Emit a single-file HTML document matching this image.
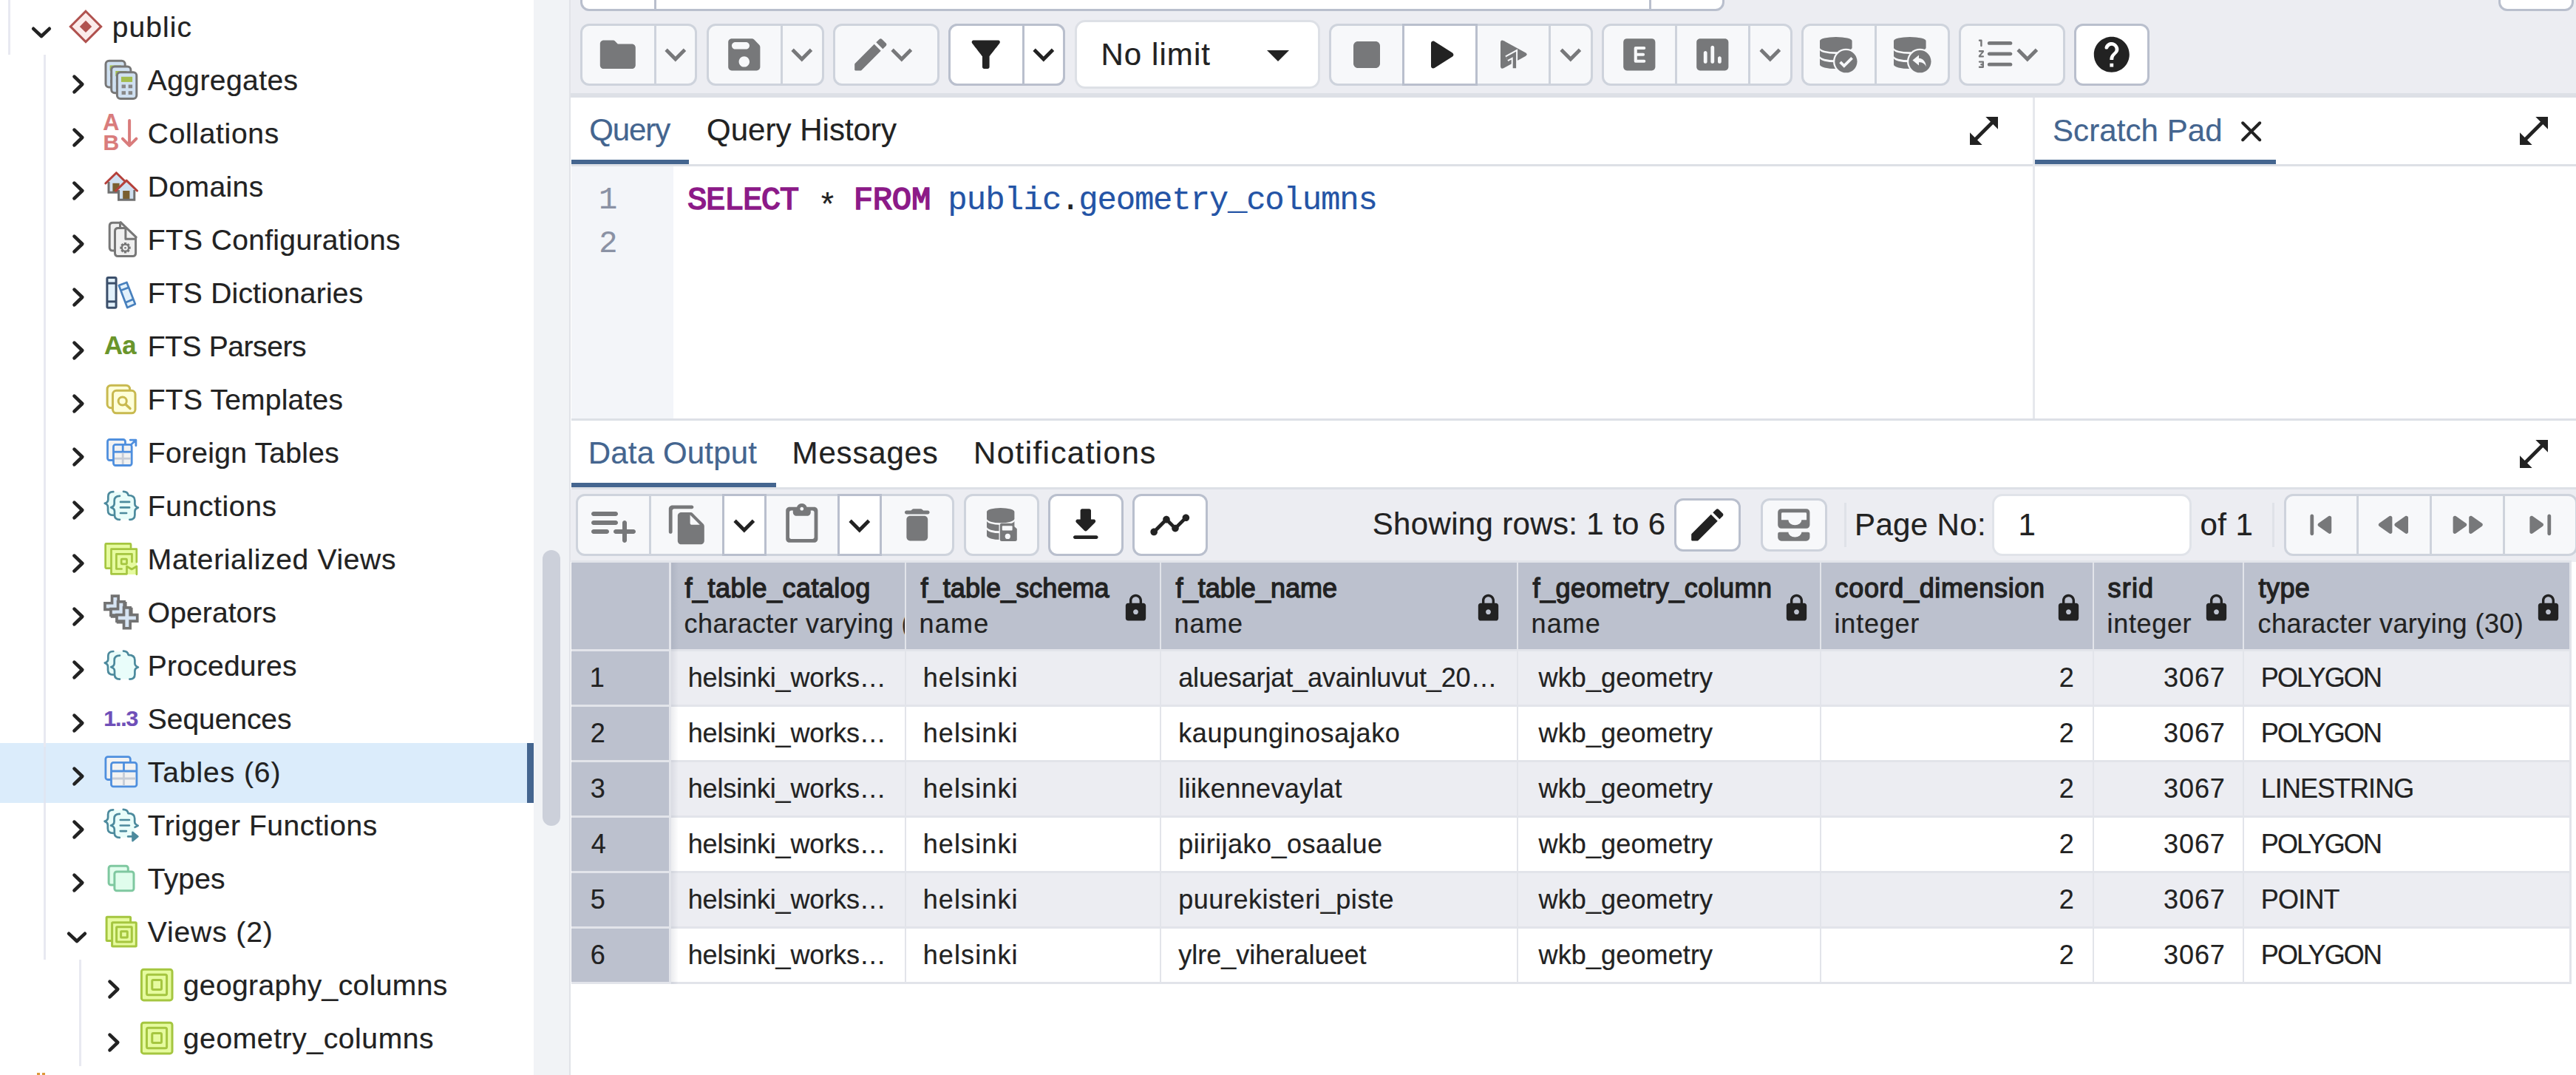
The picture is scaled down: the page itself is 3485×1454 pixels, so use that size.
<!DOCTYPE html>
<html><head><meta charset="utf-8"><title>pgAdmin</title><style>
html,body{margin:0;padding:0;background:#fff}
#app{position:relative;width:3485px;height:1454px;overflow:hidden;background:#fff;font-family:"Liberation Sans",sans-serif;color:#222}
#app div,#app svg,#app span{position:absolute;box-sizing:content-box}
#app svg{overflow:visible}
.t{line-height:1;white-space:pre;color:#222;-webkit-text-stroke-width:.2px}
.m{font-family:"Liberation Mono",monospace}
</style></head><body><div id="app">
<div style="left:0px;top:0px;width:722px;height:1454px;background:#fff;"></div>
<div style="left:722px;top:0px;width:48px;height:1454px;background:#f1f3f6;"></div>
<div style="left:734px;top:744px;width:24px;height:373px;background:#ccd0da;border-radius:12px;"></div>
<div style="left:0px;top:1005px;width:713px;height:81px;background:#dbecfb;"></div>
<div style="left:713px;top:1005px;width:9px;height:81px;background:#44658f;"></div>
<div style="left:11px;top:0px;width:3px;height:74px;background:#e8e9f1;"></div>
<div style="left:59px;top:74px;width:3px;height:1224px;background:#e8e9f1;"></div>
<div style="left:59px;top:1010px;width:3px;height:76px;background:#dfe6f3;"></div>
<div style="left:107px;top:1298px;width:3px;height:144px;background:#e8e9f1;"></div>
<div style="left:50px;top:1451px;width:4px;height:3px;background:#dd9a3a;"></div>
<div style="left:56.5px;top:1451px;width:4px;height:3px;background:#dd9a3a;"></div>
<span class="t" style="left:151.80px;top:16.90px;font-size:39px;letter-spacing:1.040px;">public</span>
<svg style="left:40px;top:28px;" width="32" height="32" viewBox="0 0 32 32"><path d="M5.2 10.8 L16 21 L26.8 10.8" fill="none" stroke="#222" stroke-width="4.6" stroke-linecap="round" stroke-linejoin="round"/></svg>
<span class="t" style="left:199.80px;top:88.90px;font-size:39px;letter-spacing:0.414px;">Aggregates</span>
<svg style="left:92px;top:94px;" width="32" height="40" viewBox="0 0 32 40"><path d="M8.5 9.7 L19.3 20 L8.5 30.3" fill="none" stroke="#222" stroke-width="4.6" stroke-linecap="round" stroke-linejoin="round"/></svg>
<span class="t" style="left:199.80px;top:160.90px;font-size:39px;letter-spacing:0.683px;">Collations</span>
<svg style="left:92px;top:166px;" width="32" height="40" viewBox="0 0 32 40"><path d="M8.5 9.7 L19.3 20 L8.5 30.3" fill="none" stroke="#222" stroke-width="4.6" stroke-linecap="round" stroke-linejoin="round"/></svg>
<span class="t" style="left:199.80px;top:232.90px;font-size:39px;letter-spacing:0.419px;">Domains</span>
<svg style="left:92px;top:238px;" width="32" height="40" viewBox="0 0 32 40"><path d="M8.5 9.7 L19.3 20 L8.5 30.3" fill="none" stroke="#222" stroke-width="4.6" stroke-linecap="round" stroke-linejoin="round"/></svg>
<span class="t" style="left:199.80px;top:304.90px;font-size:39px;letter-spacing:0.337px;">FTS Configurations</span>
<svg style="left:92px;top:310px;" width="32" height="40" viewBox="0 0 32 40"><path d="M8.5 9.7 L19.3 20 L8.5 30.3" fill="none" stroke="#222" stroke-width="4.6" stroke-linecap="round" stroke-linejoin="round"/></svg>
<span class="t" style="left:199.80px;top:376.90px;font-size:39px;letter-spacing:0.211px;">FTS Dictionaries</span>
<svg style="left:92px;top:382px;" width="32" height="40" viewBox="0 0 32 40"><path d="M8.5 9.7 L19.3 20 L8.5 30.3" fill="none" stroke="#222" stroke-width="4.6" stroke-linecap="round" stroke-linejoin="round"/></svg>
<span class="t" style="left:199.80px;top:448.90px;font-size:39px;letter-spacing:-0.416px;">FTS Parsers</span>
<svg style="left:92px;top:454px;" width="32" height="40" viewBox="0 0 32 40"><path d="M8.5 9.7 L19.3 20 L8.5 30.3" fill="none" stroke="#222" stroke-width="4.6" stroke-linecap="round" stroke-linejoin="round"/></svg>
<span class="t" style="left:199.80px;top:520.90px;font-size:39px;letter-spacing:0.222px;">FTS Templates</span>
<svg style="left:92px;top:526px;" width="32" height="40" viewBox="0 0 32 40"><path d="M8.5 9.7 L19.3 20 L8.5 30.3" fill="none" stroke="#222" stroke-width="4.6" stroke-linecap="round" stroke-linejoin="round"/></svg>
<span class="t" style="left:199.80px;top:592.90px;font-size:39px;letter-spacing:0.300px;">Foreign Tables</span>
<svg style="left:92px;top:598px;" width="32" height="40" viewBox="0 0 32 40"><path d="M8.5 9.7 L19.3 20 L8.5 30.3" fill="none" stroke="#222" stroke-width="4.6" stroke-linecap="round" stroke-linejoin="round"/></svg>
<span class="t" style="left:199.80px;top:664.90px;font-size:39px;letter-spacing:0.640px;">Functions</span>
<svg style="left:92px;top:670px;" width="32" height="40" viewBox="0 0 32 40"><path d="M8.5 9.7 L19.3 20 L8.5 30.3" fill="none" stroke="#222" stroke-width="4.6" stroke-linecap="round" stroke-linejoin="round"/></svg>
<span class="t" style="left:199.80px;top:736.90px;font-size:39px;letter-spacing:0.658px;">Materialized Views</span>
<svg style="left:92px;top:742px;" width="32" height="40" viewBox="0 0 32 40"><path d="M8.5 9.7 L19.3 20 L8.5 30.3" fill="none" stroke="#222" stroke-width="4.6" stroke-linecap="round" stroke-linejoin="round"/></svg>
<span class="t" style="left:199.80px;top:808.90px;font-size:39px;letter-spacing:0.099px;">Operators</span>
<svg style="left:92px;top:814px;" width="32" height="40" viewBox="0 0 32 40"><path d="M8.5 9.7 L19.3 20 L8.5 30.3" fill="none" stroke="#222" stroke-width="4.6" stroke-linecap="round" stroke-linejoin="round"/></svg>
<span class="t" style="left:199.80px;top:880.90px;font-size:39px;letter-spacing:0.251px;">Procedures</span>
<svg style="left:92px;top:886px;" width="32" height="40" viewBox="0 0 32 40"><path d="M8.5 9.7 L19.3 20 L8.5 30.3" fill="none" stroke="#222" stroke-width="4.6" stroke-linecap="round" stroke-linejoin="round"/></svg>
<span class="t" style="left:199.80px;top:952.90px;font-size:39px;letter-spacing:-0.057px;">Sequences</span>
<svg style="left:92px;top:958px;" width="32" height="40" viewBox="0 0 32 40"><path d="M8.5 9.7 L19.3 20 L8.5 30.3" fill="none" stroke="#222" stroke-width="4.6" stroke-linecap="round" stroke-linejoin="round"/></svg>
<span class="t" style="left:199.80px;top:1024.90px;font-size:39px;letter-spacing:0.939px;">Tables (6)</span>
<svg style="left:92px;top:1030px;" width="32" height="40" viewBox="0 0 32 40"><path d="M8.5 9.7 L19.3 20 L8.5 30.3" fill="none" stroke="#222" stroke-width="4.6" stroke-linecap="round" stroke-linejoin="round"/></svg>
<span class="t" style="left:199.80px;top:1096.90px;font-size:39px;letter-spacing:0.525px;">Trigger Functions</span>
<svg style="left:92px;top:1102px;" width="32" height="40" viewBox="0 0 32 40"><path d="M8.5 9.7 L19.3 20 L8.5 30.3" fill="none" stroke="#222" stroke-width="4.6" stroke-linecap="round" stroke-linejoin="round"/></svg>
<span class="t" style="left:199.80px;top:1168.90px;font-size:39px;letter-spacing:0.162px;">Types</span>
<svg style="left:92px;top:1174px;" width="32" height="40" viewBox="0 0 32 40"><path d="M8.5 9.7 L19.3 20 L8.5 30.3" fill="none" stroke="#222" stroke-width="4.6" stroke-linecap="round" stroke-linejoin="round"/></svg>
<span class="t" style="left:199.80px;top:1240.90px;font-size:39px;letter-spacing:0.883px;">Views (2)</span>
<svg style="left:88px;top:1252px;" width="32" height="32" viewBox="0 0 32 32"><path d="M5.2 10.8 L16 21 L26.8 10.8" fill="none" stroke="#222" stroke-width="4.6" stroke-linecap="round" stroke-linejoin="round"/></svg>
<span class="t" style="left:247.80px;top:1312.90px;font-size:39px;letter-spacing:0.386px;">geography_columns</span>
<svg style="left:140px;top:1318px;" width="32" height="40" viewBox="0 0 32 40"><path d="M8.5 9.7 L19.3 20 L8.5 30.3" fill="none" stroke="#222" stroke-width="4.6" stroke-linecap="round" stroke-linejoin="round"/></svg>
<span class="t" style="left:247.80px;top:1384.90px;font-size:39px;letter-spacing:0.621px;">geometry_columns</span>
<svg style="left:140px;top:1390px;" width="32" height="40" viewBox="0 0 32 40"><path d="M8.5 9.7 L19.3 20 L8.5 30.3" fill="none" stroke="#222" stroke-width="4.6" stroke-linecap="round" stroke-linejoin="round"/></svg>
<svg style="left:82px;top:0px;" width="70" height="72" viewBox="0 0 70 72"><path d="M34 15.2L54.7 35.9L34 56.599999999999994L13.3 35.9Z" fill="#fbeceb" stroke="#b0524f" stroke-width="3"/><path d="M34 27.7L42.2 35.9L34 44.099999999999994L25.8 35.9Z" fill="#b0524f"/></svg>
<svg style="left:130px;top:72px;" width="70" height="72" viewBox="0 0 70 72"><rect x="13.00" y="10.30" width="26.20" height="35.80" rx="4.5" fill="#cfe0f1" stroke="#777" stroke-width="3"/><rect x="18.6" y="16.4" width="15.1" height="7.1" fill="#a3bd4e"/><rect x="19.2" y="27.1" width="5.4" height="4.8" fill="#888"/><rect x="19.2" y="35.8" width="5.4" height="4.8" fill="#888"/><rect x="28.3" y="27.1" width="5.4" height="4.8" fill="#888"/><rect x="28.3" y="35.8" width="5.4" height="4.8" fill="#888"/><rect x="20.70" y="17.90" width="26.20" height="35.90" rx="4.5" fill="#cfe0f1" stroke="#777" stroke-width="3"/><rect x="26.3" y="24.0" width="15.1" height="7.1" fill="#a3bd4e"/><rect x="26.9" y="34.7" width="5.4" height="4.8" fill="#888"/><rect x="26.9" y="43.4" width="5.4" height="4.8" fill="#888"/><rect x="36.0" y="34.7" width="5.4" height="4.8" fill="#888"/><rect x="36.0" y="43.4" width="5.4" height="4.8" fill="#888"/><rect x="28.40" y="25.70" width="26.40" height="35.80" rx="4.5" fill="#cfe0f1" stroke="#777" stroke-width="3"/><rect x="34.0" y="31.8" width="15.1" height="7.1" fill="#a3bd4e"/><rect x="34.6" y="42.5" width="5.4" height="4.8" fill="#888"/><rect x="34.6" y="51.2" width="5.4" height="4.8" fill="#888"/><rect x="43.7" y="42.5" width="5.4" height="4.8" fill="#888"/><rect x="43.7" y="51.2" width="5.4" height="4.8" fill="#888"/></svg>
<svg style="left:130px;top:144px;" width="70" height="72" viewBox="0 0 70 72"><path d="M45.1 18.9V52.3M35.9 43.6L45.1 52.8L54.4 43.6" fill="none" stroke="#d97c7c" stroke-width="4" stroke-linecap="round" stroke-linejoin="round"/></svg>
<span class="t" style="left:139.20px;top:149.90px;font-size:30.6px;font-weight:700;color:#d97c7c;">A</span>
<span class="t" style="left:139.50px;top:178.00px;font-size:30px;font-weight:700;color:#d97c7c;">B</span>
<svg style="left:130px;top:216px;" width="70" height="72" viewBox="0 0 70 72"><path d="M16.500 30V44.500H39V30L27.400 19Z" fill="#cfe0f1"/><rect x="22.400" y="31.800" width="9.200" height="11.300" fill="#7a5f30"/><path d="M17 30V44.300H38" fill="none" stroke="#707070" stroke-width="3"/><path d="M12.800 32L27.400 17.700L42.200 32.200" fill="none" stroke="#b5403a" stroke-width="3" stroke-linecap="round" stroke-linejoin="round"/><path d="M30 40V54H52.500V40L41.100 29Z" fill="#cfe0f1"/><rect x="36.200" y="42" width="9.200" height="11" fill="#7a5f30"/><path d="M30.500 41V54.200H51.800V41" fill="none" stroke="#707070" stroke-width="3"/><path d="M26.600 42.200L41.100 28.100L55.500 42" fill="none" stroke="#b5403a" stroke-width="3" stroke-linecap="round" stroke-linejoin="round"/></svg>
<svg style="left:130px;top:288px;" width="70" height="72" viewBox="0 0 70 72"><path d="M22 13.300H33L40 20.400H26V51H22Q18.200 51 18.200 46.700V17.600Q18.200 13.300 22 13.300Z" fill="#f0f0f0"/><path d="M29.500 20.400H41L53.600 33V54.300Q53.600 58.600 49.300 58.600H29.800Q25.500 58.600 25.500 54.300V24.700Q25.500 20.400 29.500 20.400Z" fill="#f0f0f0"/><path d="M32.500 13.300H22.500Q18.200 13.300 18.200 17.600V46.700Q18.200 51 22.500 51H25.500" fill="none" stroke="#777" stroke-width="3" stroke-linecap="round" stroke-linejoin="round"/><path d="M39.900 20.400H29.800Q25.500 20.400 25.500 24.700V54.300Q25.500 58.600 29.800 58.600H49.300Q53.600 58.600 53.600 54.300V33.500" fill="none" stroke="#777" stroke-width="3" stroke-linecap="round" stroke-linejoin="round"/><path d="M33.200 12.600L54.200 32.900M39.900 20.400V35.200H53.600M32.500 13.300V20.400" fill="none" stroke="#777" stroke-width="3" stroke-linecap="round" stroke-linejoin="round"/><path d="M44.00 47.20L46.70 47.20M42.68 50.38L44.59 52.29M39.50 51.70L39.50 54.40M36.32 50.38L34.41 52.29M35.00 47.20L32.30 47.20M36.32 44.02L34.41 42.11M39.50 42.70L39.50 40.00M42.68 44.02L44.59 42.11" fill="none" stroke="#777" stroke-width="3.300"/><circle cx="39.5" cy="47.2" r="5.700" fill="#777"/><circle cx="39.5" cy="47.2" r="3.400" fill="#f0f0f0"/><circle cx="39.5" cy="47.2" r="1.300" fill="#777"/></svg>
<svg style="left:130px;top:360px;" width="70" height="72" viewBox="0 0 70 72"><rect x="14.90" y="15.60" width="12.20" height="40.60" rx="1.5" fill="#e2f1fb" stroke="#3b4f6b" stroke-width="3"/><line x1="14.00" y1="23.10" x2="28.00" y2="23.10" stroke="#3b4f6b" stroke-width="3" stroke-linecap="butt"/><line x1="14.00" y1="47.90" x2="28.00" y2="47.90" stroke="#3b4f6b" stroke-width="3" stroke-linecap="butt"/><path d="M30.800 25.900L41.500 21.900L52.900 51.200L42.200 56Z" fill="#e2f1fb" stroke="#4880bd" stroke-width="2.700" stroke-linejoin="round"/><path d="M33.700 32.800L44.300 28.700M39.700 49.300L50.200 44.700" fill="none" stroke="#4880bd" stroke-width="2.700"/></svg>
<span class="t" style="left:141.00px;top:449.90px;font-size:34.6px;font-weight:700;color:#6a952b;letter-spacing:-0.771px;">Aa</span>
<svg style="left:130px;top:504px;" width="70" height="72" viewBox="0 0 70 72"><rect x="15.10" y="17.20" width="30.50" height="30.50" rx="5" fill="#feffd9" stroke="#c8b94f" stroke-width="3"/><rect x="22.50" y="24.30" width="30.50" height="30.50" rx="5" fill="#feffd9" stroke="#c8b94f" stroke-width="3"/><circle cx="35.7" cy="38.5" r="5.6" fill="none" stroke="#c8b94f" stroke-width="3"/><path d="M40 43L46 48.6" stroke="#c8b94f" stroke-width="3.4" stroke-linecap="round"/></svg>
<svg style="left:130px;top:576px;" width="70" height="72" viewBox="0 0 70 72"><rect x="15.50" y="18.50" width="24.00" height="28.00" rx="2.8" fill="#f2f2f2" stroke="#4f8fde" stroke-width="2.8"/><rect x="23.50" y="25.40" width="24.70" height="28.10" rx="2.8" fill="#f2f2f2" stroke="#4f8fde" stroke-width="2.8"/><line x1="36.20" y1="25.20" x2="36.20" y2="35.20" stroke="#4f8fde" stroke-width="2.8" stroke-linecap="butt"/><line x1="23.30" y1="35.20" x2="48.40" y2="35.20" stroke="#4f8fde" stroke-width="2.8" stroke-linecap="butt"/><line x1="25.00" y1="44.20" x2="46.80" y2="44.20" stroke="#c6ccd6" stroke-width="2.8" stroke-linecap="butt"/><line x1="36.20" y1="36.60" x2="36.20" y2="52.00" stroke="#c6ccd6" stroke-width="2.8" stroke-linecap="butt"/><path d="M47.200 25.500L53.600 19.400M46.200 19.100H53.900V26.700" fill="none" stroke="#4f8fde" stroke-width="2.800" stroke-linecap="round" stroke-linejoin="round"/></svg>
<svg style="left:130px;top:648px;" width="70" height="72" viewBox="0 0 70 72"><g transform="translate(0.2,1.9)"><path d="M23 15.5H37C41 15.500 43 17 43.500 20.300C50 20.300 52 23 52 27V46.500C52 50 50 52.700 45 52.700H32C27 52.700 25 50 25 46.900H23C18.500 46.900 16 44.500 16 40.500V21.500C16 17.500 18.500 15.500 23 15.500Z" fill="#e9fdfa"/><path d="M23.100 15.300C18.500 15.300 16.100 17.500 16.100 21.500V25.500C16.100 28.300 14.500 30 11.600 30.900C14.500 31.800 15.800 33.500 15.800 36.300V40.500C15.800 44.500 18.500 46.900 23.100 46.900" fill="none" stroke="#4c8a9d" stroke-width="2.7" stroke-linecap="round" stroke-linejoin="round"/><path d="M31.800 20.900C27 20.900 24.500 23.200 24.500 27.200V31.200C24.500 34 23 35.600 20 36.500C23 37.400 24.800 39 24.800 41.800V46.500C24.800 50.500 27.200 52.900 31.800 52.900" fill="none" stroke="#4c8a9d" stroke-width="2.7" stroke-linecap="round" stroke-linejoin="round"/><path d="M36.800 14.900C41 14.900 42.800 16.800 43.500 20.100C49.500 20.100 52.200 22.500 52.200 27V31.500C52.200 34 53.800 35.600 56.700 36.700C53.800 37.600 52.200 39.200 52.200 42V46.500C52.200 50.500 49.800 52.900 45.200 52.900" fill="none" stroke="#4c8a9d" stroke-width="2.7" stroke-linecap="round" stroke-linejoin="round"/><path d="M32.800 29H44.900M32.800 36.500H44.900M32.800 44.100H40.900" fill="none" stroke="#4c8a9d" stroke-width="2.7" stroke-linecap="round" stroke-linejoin="round"/></g></svg>
<svg style="left:130px;top:720px;" width="70" height="72" viewBox="0 0 70 72"><rect x="12.65" y="15.45" width="34.40" height="33.10" rx="1" fill="#e6fb9f" stroke="#a5c640" stroke-width="2.7"/><path d="M20.5 22.7H54.8V40.7L55 46V57H41.5V56.3H20.5Z" fill="#e6fb9f"/><path d="M54.8 40.2V22.7H20.5V56.3H41.5V46L48.2 50L54.9 46V56.8" fill="none" stroke="#a5c640" stroke-width="2.7" stroke-linecap="round" stroke-linejoin="round"/><path d="M34.6 49.5H27.4V29.4H48.5V40" fill="none" stroke="#a5c640" stroke-width="2.7" stroke-linecap="round" stroke-linejoin="round"/><rect x="34.15" y="36.05" width="7.40" height="6.80" rx="1" fill="#e6fb9f" stroke="#a5c640" stroke-width="2.7"/></svg>
<svg style="left:130px;top:792px;" width="70" height="72" viewBox="0 0 70 72"><path d="M21.54 14.15H30.16V23.74H39.75V32.36H30.16V41.95H21.54V32.36H11.95V23.74H21.54Z" fill="#d6e4f3" stroke="#727272" stroke-width="3.7"/><path d="M29.54 21.95H38.16V31.54H47.75V40.16H38.16V49.75H29.54V40.16H19.95V31.54H29.54Z" fill="#d6e4f3" stroke="#727272" stroke-width="3.7"/><path d="M37.54 29.95H46.16V39.54H55.75V48.16H46.16V57.75H37.54V48.16H27.95V39.54H37.54Z" fill="#d6e4f3" stroke="#727272" stroke-width="3.7"/></svg>
<svg style="left:130px;top:864px;" width="70" height="72" viewBox="0 0 70 72"><g transform="translate(0.2,1.7)"><path d="M23 15.5H37C41 15.500 43 17 43.500 20.300C50 20.300 52 23 52 27V46.500C52 50 50 52.700 45 52.700H32C27 52.700 25 50 25 46.900H23C18.500 46.900 16 44.500 16 40.500V21.500C16 17.500 18.500 15.500 23 15.500Z" fill="#e9fdfa"/><path d="M23.100 15.300C18.500 15.300 16.100 17.500 16.100 21.500V25.500C16.100 28.300 14.500 30 11.600 30.900C14.500 31.800 15.800 33.500 15.800 36.300V40.500C15.800 44.500 18.500 46.900 23.100 46.900" fill="none" stroke="#4c8a9d" stroke-width="2.7" stroke-linecap="round" stroke-linejoin="round"/><path d="M31.800 20.900C27 20.900 24.500 23.200 24.500 27.200V31.200C24.500 34 23 35.600 20 36.500C23 37.400 24.800 39 24.800 41.800V46.500C24.800 50.500 27.200 52.900 31.800 52.900" fill="none" stroke="#4c8a9d" stroke-width="2.7" stroke-linecap="round" stroke-linejoin="round"/><path d="M36.800 14.900C41 14.900 42.800 16.800 43.500 20.100C49.500 20.100 52.200 22.500 52.200 27V31.500C52.200 34 53.800 35.600 56.700 36.700C53.800 37.600 52.200 39.200 52.200 42V46.500C52.200 50.500 49.800 52.900 45.200 52.900" fill="none" stroke="#4c8a9d" stroke-width="2.7" stroke-linecap="round" stroke-linejoin="round"/></g></svg>
<span class="t" style="left:140.20px;top:956.90px;font-size:30.3px;font-weight:700;color:#6f4fb8;letter-spacing:-1.128px;">1..3</span>
<svg style="left:130px;top:1008px;" width="70" height="72" viewBox="0 0 70 72"><rect x="12.90" y="15.60" width="33.40" height="30.90" rx="3" fill="#f2f2f2" stroke="#4f8fde" stroke-width="2.8"/><rect x="20.50" y="23.40" width="34.40" height="32.50" rx="3" fill="#f2f2f2" stroke="#4f8fde" stroke-width="2.8"/><line x1="37.50" y1="23.20" x2="37.50" y2="35.00" stroke="#4f8fde" stroke-width="2.8" stroke-linecap="butt"/><line x1="20.30" y1="35.00" x2="55.10" y2="35.00" stroke="#4f8fde" stroke-width="2.8" stroke-linecap="butt"/><line x1="21.90" y1="45.00" x2="53.50" y2="45.00" stroke="#c6ccd6" stroke-width="2.8" stroke-linecap="butt"/><line x1="37.50" y1="36.40" x2="37.50" y2="54.40" stroke="#c6ccd6" stroke-width="2.8" stroke-linecap="butt"/></svg>
<svg style="left:130px;top:1080px;" width="70" height="72" viewBox="0 0 70 72"><g transform="translate(0,0)"><path d="M23 15.5H37C41 15.500 43 17 43.500 20.300C50 20.300 52 23 52 27V46.500C52 50 50 52.700 45 52.700H32C27 52.700 25 50 25 46.900H23C18.500 46.900 16 44.500 16 40.500V21.500C16 17.500 18.500 15.500 23 15.500Z" fill="#e9fdfa"/><path d="M23.100 15.300C18.500 15.300 16.100 17.500 16.100 21.500V25.500C16.100 28.300 14.500 30 11.600 30.900C14.500 31.800 15.800 33.500 15.800 36.300V40.500C15.800 44.500 18.500 46.900 23.100 46.900" fill="none" stroke="#4c8a9d" stroke-width="2.7" stroke-linecap="round" stroke-linejoin="round"/><path d="M31.800 20.900C27 20.900 24.500 23.200 24.500 27.200V31.200C24.500 34 23 35.600 20 36.500C23 37.400 24.800 39 24.800 41.800V46.500C24.800 50.500 27.200 52.900 31.800 52.900" fill="none" stroke="#4c8a9d" stroke-width="2.7" stroke-linecap="round" stroke-linejoin="round"/><path d="M36.800 14.900C41 14.900 42.800 16.800 43.500 20.100C49.500 20.100 52.200 22.500 52.200 27V31.500C52.200 34 53.800 35.600 56.700 36.700C55.500 37.500 54 38.300 52.600 38.800" fill="none" stroke="#4c8a9d" stroke-width="2.7" stroke-linecap="round" stroke-linejoin="round"/><path d="M32.800 29H44.900M32.800 36.500H44.900M32.800 44.100H40.900" fill="none" stroke="#4c8a9d" stroke-width="2.7" stroke-linecap="round" stroke-linejoin="round"/><path d="M43.200 51.400H49" fill="none" stroke="#4c8a9d" stroke-width="2.7" stroke-linecap="round" stroke-linejoin="round"/><path d="M49.400 45.600L56.500 51.400L49.400 57.200Z" fill="#4c8a9d" stroke="#4c8a9d" stroke-width="2.4" stroke-linejoin="round"/></g></svg>
<svg style="left:130px;top:1152px;" width="70" height="72" viewBox="0 0 70 72"><rect x="17.10" y="19.30" width="26.20" height="25.80" rx="3" fill="#e0fdec" stroke="#7fc8a0" stroke-width="3"/><rect x="24.90" y="27.00" width="26.10" height="25.80" rx="3" fill="#e0fdec" stroke="#7fc8a0" stroke-width="3"/></svg>
<svg style="left:130px;top:1224px;" width="70" height="72" viewBox="0 0 70 72"><rect x="14.10" y="16.30" width="32.50" height="32.10" rx="1" fill="#e6fb9f" stroke="#a5c640" stroke-width="3"/><rect x="21.60" y="23.70" width="32.70" height="32.30" rx="1" fill="#e6fb9f" stroke="#a5c640" stroke-width="3"/><rect x="27.60" y="29.70" width="20.70" height="20.30" rx="0.5" fill="#e6fb9f" stroke="#a5c640" stroke-width="3"/><rect x="33.60" y="35.70" width="8.70" height="8.40" rx="0.5" fill="#e6fb9f" stroke="#a5c640" stroke-width="3"/></svg>
<svg style="left:178px;top:1296px;" width="70" height="72" viewBox="0 0 70 72"><rect x="13.40" y="15.20" width="41.60" height="41.70" rx="3" fill="#e6fb9f" stroke="#a5c640" stroke-width="3"/><rect x="20.50" y="22.30" width="27.10" height="27.50" rx="2" fill="#e6fb9f" stroke="#a5c640" stroke-width="3"/><rect x="27.80" y="29.60" width="12.70" height="12.90" rx="1.5" fill="#e6fb9f" stroke="#a5c640" stroke-width="3"/></svg>
<svg style="left:178px;top:1368px;" width="70" height="72" viewBox="0 0 70 72"><rect x="13.40" y="15.20" width="41.60" height="41.70" rx="3" fill="#e6fb9f" stroke="#a5c640" stroke-width="3"/><rect x="20.50" y="22.30" width="27.10" height="27.50" rx="2" fill="#e6fb9f" stroke="#a5c640" stroke-width="3"/><rect x="27.80" y="29.60" width="12.70" height="12.90" rx="1.5" fill="#e6fb9f" stroke="#a5c640" stroke-width="3"/></svg>
<div style="left:769.6px;top:0px;width:2.4px;height:1454px;background:#e1e3e8;"></div>
<div style="left:772px;top:0px;width:2713px;height:126px;background:#ecedf2;"></div>
<div style="left:772px;top:126px;width:2713px;height:6px;background:#dde0e6;"></div>
<div style="left:772px;top:132px;width:2713px;height:1322px;background:#fff;"></div>
<div style="left:785px;top:-30px;width:1542px;height:39px;background:#fff;border:3px solid #b9bfcd;border-radius:12px;"></div>
<div style="left:885px;top:0px;width:3px;height:13px;background:#b9bfcd;"></div>
<div style="left:2231px;top:0px;width:3px;height:13px;background:#b9bfcd;"></div>
<div style="left:3380px;top:-30px;width:96px;height:39px;background:#fff;border:3px solid #b9bfcd;border-radius:12px;"></div>
<div style="left:785px;top:32px;width:152px;height:78px;background:#f7f8fa;border:3px solid #ced3dc;border-radius:12px;"></div>
<div style="left:885px;top:32px;width:3px;height:84px;background:#ced3dc;"></div>
<svg style="left:807.2px;top:45.0px;" width="57.6" height="57.6" viewBox="0 0 24 24"><path fill="#77787a" fill-rule="evenodd" d="M10.59 4.59C10.21 4.21 9.7 4 9.17 4H4c-1.1 0-1.99.9-1.99 2L2 18c0 1.1.9 2 2 2h16c1.1 0 2-.9 2-2V8c0-1.1-.9-2-2-2h-8l-1.41-1.41z"/></svg>
<svg style="left:885.2px;top:45.0px;" width="57.6" height="57.6" viewBox="0 0 24 24"><path fill="#77787a" fill-rule="evenodd" d="M7.41 8.59 12 13.17l4.59-4.58L18 10l-6 6-6-6 1.41-1.41z"/></svg>
<div style="left:956px;top:32px;width:153px;height:78px;background:#f7f8fa;border:3px solid #ced3dc;border-radius:12px;"></div>
<div style="left:1056px;top:32px;width:3px;height:84px;background:#ced3dc;"></div>
<svg style="left:978.0px;top:45.0px;" width="57.6" height="57.6" viewBox="0 0 24 24"><path fill="#77787a" fill-rule="evenodd" d="M17.59 3.59c-.38-.38-.89-.59-1.42-.59H5c-1.11 0-2 .9-2 2v14c0 1.1.9 2 2 2h14c1.1 0 2-.9 2-2V7.83c0-.53-.21-1.04-.59-1.41l-2.82-2.83zM12 19c-1.66 0-3-1.34-3-3s1.34-3 3-3 3 1.34 3 3-1.34 3-3 3zm1-10H7c-1.1 0-2-.9-2-2s.9-2 2-2h6c1.1 0 2 .9 2 2s-.9 2-2 2z"/></svg>
<svg style="left:1056.2px;top:45.0px;" width="57.6" height="57.6" viewBox="0 0 24 24"><path fill="#77787a" fill-rule="evenodd" d="M7.41 8.59 12 13.17l4.59-4.58L18 10l-6 6-6-6 1.41-1.41z"/></svg>
<div style="left:1127px;top:32px;width:138px;height:78px;background:#f7f8fa;border:3px solid #ced3dc;border-radius:12px;"></div>
<svg style="left:1148.8px;top:45.0px;" width="57.6" height="57.6" viewBox="0 0 24 24"><path fill="#77787a" fill-rule="evenodd" d="M3 17.46v3.04c0 .28.22.5.5.5h3.04c.13 0 .26-.05.35-.15L17.81 9.94l-3.75-3.75L3.15 17.1c-.1.1-.15.22-.15.36zM20.71 7.04c.39-.39.39-1.02 0-1.41l-2.34-2.34c-.39-.39-1.02-.39-1.41 0l-1.83 1.83 3.75 3.75 1.83-1.83z"/></svg>
<svg style="left:1191.2px;top:45.0px;" width="57.6" height="57.6" viewBox="0 0 24 24"><path fill="#77787a" fill-rule="evenodd" d="M7.41 8.59 12 13.17l4.59-4.58L18 10l-6 6-6-6 1.41-1.41z"/></svg>
<div style="left:1283px;top:32px;width:152px;height:78px;background:#f7f8fa;border:3px solid #ced3dc;border-radius:12px;"></div>
<div style="left:1283px;top:32px;width:152px;height:78px;background:#fff;border:3px solid #b9bfcd;border-radius:12px;"></div>
<div style="left:1383px;top:32px;width:3px;height:84px;background:#b9bfcd;"></div>
<svg style="left:1305.2px;top:45.0px;" width="57.6" height="57.6" viewBox="0 0 24 24"><path fill="#222" fill-rule="evenodd" d="M4.25 5.61C6.27 8.2 10 13 10 13v6c0 .55.45 1 1 1h2c.55 0 1-.45 1-1v-6s3.72-4.8 5.74-7.39c.51-.66.04-1.61-.79-1.61H5.04c-.83 0-1.3.95-.79 1.61z"/></svg>
<svg style="left:1383.0px;top:45.0px;" width="57.6" height="57.6" viewBox="0 0 24 24"><path fill="#222" fill-rule="evenodd" d="M7.41 8.59 12 13.17l4.59-4.58L18 10l-6 6-6-6 1.41-1.41z"/></svg>
<div style="left:1454px;top:27px;width:326px;height:87px;background:#fff;border:3px solid #dde0e6;border-radius:14px;"></div>
<span class="t" style="left:1489.40px;top:53.00px;font-size:42px;letter-spacing:1.080px;">No limit</span>
<svg style="left:1693.0px;top:38.4px;" width="72" height="72" viewBox="0 0 24 24"><path fill="#222" fill-rule="evenodd" d="M7 10l5 5 5-5z"/></svg>
<div style="left:1798px;top:32px;width:351px;height:78px;background:#f7f8fa;border:3px solid #ced3dc;border-radius:12px;"></div>
<div style="left:1897px;top:32px;width:3px;height:84px;background:#ced3dc;"></div>
<div style="left:1996px;top:32px;width:3px;height:84px;background:#ced3dc;"></div>
<div style="left:2095px;top:32px;width:3px;height:84px;background:#ced3dc;"></div>
<div style="left:1897px;top:32px;width:96px;height:78px;background:#fff;border:3px solid #b9bfcd;border-radius:0;"></div>
<svg style="left:1813.0px;top:37.8px;" width="72" height="72" viewBox="0 0 24 24"><path fill="#77787a" fill-rule="evenodd" d="M8 6h8c1.1 0 2 .9 2 2v8c0 1.1-.9 2-2 2H8c-1.1 0-2-.9-2-2V8c0-1.1.9-2 2-2z"/></svg>
<svg style="left:1912.2px;top:37.8px;" width="72" height="72" viewBox="0 0 24 24"><path fill="#222" fill-rule="evenodd" d="M8 6.82v10.36c0 .79.87 1.27 1.54.84l8.14-5.18c.62-.39.62-1.29 0-1.69L9.54 5.98C8.87 5.55 8 6.03 8 6.82z"/></svg>
<svg style="left:2096.2px;top:45.0px;" width="57.6" height="57.6" viewBox="0 0 24 24"><path fill="#77787a" fill-rule="evenodd" d="M7.41 8.59 12 13.17l4.59-4.58L18 10l-6 6-6-6 1.41-1.41z"/></svg>
<svg style="left:2026px;top:50px;" width="48" height="48" viewBox="0 0 48 48"><path d="M4 8Q4 3 8.5 5.2L37.8 21.2Q41.5 23.6 37.8 26L8.5 42Q4 44.2 4 39.2Z" fill="#77787a"/><path d="M12.4 29.2L22.9 23.4V42.3" fill="none" stroke="#f7f8fa" stroke-width="8.4" stroke-linejoin="miter"/><path d="M12.4 29.2L22.9 23.4V42.3" fill="none" stroke="#77787a" stroke-width="4.4" stroke-linejoin="miter"/></svg>
<div style="left:2167px;top:32px;width:252px;height:78px;background:#f7f8fa;border:3px solid #ced3dc;border-radius:12px;"></div>
<div style="left:2266px;top:32px;width:3px;height:84px;background:#ced3dc;"></div>
<div style="left:2365px;top:32px;width:3px;height:84px;background:#ced3dc;"></div>
<svg style="left:2189.0px;top:45.0px;" width="57.6" height="57.6" viewBox="0 0 24 24"><rect x="3" y="3" width="18" height="18" rx="2" fill="#77787a"/><path d="M14.700 8.300H9.900V15.700H14.700M9.900 12H14.200" fill="none" stroke="#f7f8fa" stroke-width="1.700" stroke-linecap="round" stroke-linejoin="round"/></svg>
<svg style="left:2288.2px;top:45.0px;" width="57.6" height="57.6" viewBox="0 0 24 24"><path fill="#77787a" fill-rule="evenodd" d="M19 3H5c-1.1 0-2 .9-2 2v14c0 1.1.9 2 2 2h14c1.1 0 2-.9 2-2V5c0-1.1-.9-2-2-2zM8 17c-.55 0-1-.45-1-1v-5c0-.55.45-1 1-1s1 .45 1 1v5c0 .55-.45 1-1 1zm4 0c-.55 0-1-.45-1-1V8c0-.55.45-1 1-1s1 .45 1 1v8c0 .55-.45 1-1 1zm4 0c-.55 0-1-.45-1-1v-2c0-.55.45-1 1-1s1 .45 1 1v2c0 .55-.45 1-1 1z"/></svg>
<svg style="left:2366.2px;top:45.0px;" width="57.6" height="57.6" viewBox="0 0 24 24"><path fill="#77787a" fill-rule="evenodd" d="M7.41 8.59 12 13.17l4.59-4.58L18 10l-6 6-6-6 1.41-1.41z"/></svg>
<div style="left:2437px;top:32px;width:195px;height:78px;background:#f7f8fa;border:3px solid #ced3dc;border-radius:12px;"></div>
<div style="left:2536px;top:32px;width:3px;height:84px;background:#ced3dc;"></div>
<svg style="left:2462.4px;top:49.5px;" width="56" height="56" viewBox="0 0 56 56"><path d="M0 5.5A21.8 5.5 0 0 1 43.6 5.5V14.8A21.8 5.5 0 0 1 0 14.8Z" fill="#77787a"/><path d="M0 17.4A21.8 5.5 0 0 0 43.6 17.4V25.8A21.8 5.5 0 0 1 0 25.8Z" fill="#77787a"/><path d="M0 28.8A21.8 5.5 0 0 0 43.6 28.8V37.6A21.8 5.5 0 0 1 0 37.6Z" fill="#77787a"/><circle cx="35.4" cy="33.2" r="17.4" fill="#f7f8fa"/><circle cx="35.4" cy="33.2" r="15.1" fill="#77787a"/><path d="M27.600 33.800L32.800 39L43.600 28.300" fill="none" stroke="#f7f8fa" stroke-width="3.800"/></svg>
<svg style="left:2561.7px;top:49.5px;" width="56" height="56" viewBox="0 0 56 56"><path d="M0 5.5A21.8 5.5 0 0 1 43.6 5.5V14.8A21.8 5.5 0 0 1 0 14.8Z" fill="#77787a"/><path d="M0 17.4A21.8 5.5 0 0 0 43.6 17.4V25.8A21.8 5.5 0 0 1 0 25.8Z" fill="#77787a"/><path d="M0 28.8A21.8 5.5 0 0 0 43.6 28.8V37.6A21.8 5.5 0 0 1 0 37.6Z" fill="#77787a"/><circle cx="35.4" cy="33.2" r="17.4" fill="#f7f8fa"/><circle cx="35.4" cy="33.2" r="15.1" fill="#77787a"/><path d="M34 24.500L25.400 31.500L34 38.500V34.200C39 34.200 42 36 43.800 40.200C43.300 33.500 40 29.300 34 28.800Z" fill="#f7f8fa"/></svg>
<div style="left:2650px;top:32px;width:138px;height:78px;background:#f7f8fa;border:3px solid #ced3dc;border-radius:12px;"></div>
<svg style="left:2671.7px;top:44.1px;" width="57.6" height="57.6" viewBox="0 0 24 24"><path fill="#77787a" fill-rule="evenodd" d="M8 7h12c.55 0 1-.45 1-1s-.45-1-1-1H8c-.55 0-1 .45-1 1s.45 1 1 1zm12 10H8c-.55 0-1 .45-1 1s.45 1 1 1h12c.55 0 1-.45 1-1s-.45-1-1-1zm0-6H8c-.55 0-1 .45-1 1s.45 1 1 1h12c.55 0 1-.45 1-1s-.45-1-1-1zM4.5 16h-2c-.28 0-.5.22-.5.5s.22.5.5.5H4v.5h-.5c-.28 0-.5.22-.5.5s.22.5.5.5H4v.5H2.5c-.28 0-.5.22-.5.5s.22.5.5.5h2c.28 0 .5-.22.5-.5v-3c0-.28-.22-.5-.5-.5zm-2-11H3v2.5c0 .28.22.5.5.5s.5-.22.5-.5v-3c0-.28-.22-.5-.5-.5h-1c-.28 0-.5.22-.5.5s.22.5.5.5zm2 5h-2c-.28 0-.5.22-.5.5s.22.5.5.5h1.3l-1.68 1.96c-.08.09-.12.21-.12.32v.22c0 .28.22.5.5.5h2c.28 0 .5-.22.5-.5s-.22-.5-.5-.5H3.2l1.68-1.96c.08-.09.12-.21.12-.32v-.22c0-.28-.22-.5-.5-.5z"/></svg>
<svg style="left:2714.4px;top:45.0px;" width="57.6" height="57.6" viewBox="0 0 24 24"><path fill="#77787a" fill-rule="evenodd" d="M7.41 8.59 12 13.17l4.59-4.58L18 10l-6 6-6-6 1.41-1.41z"/></svg>
<div style="left:2806px;top:32px;width:96px;height:78px;background:#fff;border:3px solid #b9bfcd;border-radius:12px;"></div>
<svg style="left:2828.3px;top:44.8px;" width="57.6" height="57.6" viewBox="0 0 24 24"><path fill="#222" fill-rule="evenodd" d="M12 2C6.48 2 2 6.48 2 12s4.48 10 10 10 10-4.48 10-10S17.52 2 12 2zm1 17h-2v-2h2v2zm2.07-7.75-.9.92c-.5.51-.86.97-1.04 1.69-.08.32-.13.68-.13 1.14h-2v-.5c0-.46.08-.9.22-1.31.2-.58.53-1.1.95-1.52l1.24-1.26c.46-.44.68-1.1.55-1.8-.13-.72-.69-1.33-1.39-1.53-1.11-.31-2.14.32-2.47 1.27-.12.37-.43.65-.82.65h-.3C8.4 9 8 8.44 8.16 7.88c.43-1.47 1.68-2.59 3.23-2.83 1.52-.24 2.97.55 3.87 1.8 1.18 1.63.83 3.38-.19 4.4z"/></svg>
<div style="left:773px;top:222px;width:2712px;height:3px;background:#dde0e6;"></div>
<span class="t" style="left:797.20px;top:155.00px;font-size:42px;color:#44658f;letter-spacing:-1.093px;">Query</span>
<span class="t" style="left:956.00px;top:155.00px;font-size:42px;letter-spacing:0.024px;">Query History</span>
<div style="left:773px;top:216px;width:158.5px;height:6px;background:#44658f;"></div>
<div style="left:2750px;top:132px;width:3px;height:434px;background:#e6e8ed;"></div>
<span class="t" style="left:2777.00px;top:155.80px;font-size:42px;color:#44658f;letter-spacing:0.087px;">Scratch Pad</span>
<div style="left:2753px;top:216px;width:326px;height:6px;background:#44658f;"></div>
<svg style="left:3021.3px;top:152.7px;" width="49.4" height="49.4" viewBox="0 0 24 24"><path fill="#222" fill-rule="evenodd" d="M18.3 5.710c-.39-.39-1.02-.39-1.41 0L12 10.590 7.110 5.700c-.39-.39-1.02-.39-1.41 0-.39.39-.39 1.02 0 1.410L10.590 12 5.700 16.890c-.39.39-.39 1.02 0 1.410.39.39 1.02.39 1.41 0L12 13.410l4.890 4.890c.39.39 1.02.39 1.41 0 .39-.39.39-1.02 0-1.410L13.410 12l4.890-4.890c.38-.38.38-1.02 0-1.400z"/></svg>
<svg style="left:2665px;top:158px;" width="38" height="38" viewBox="0 0 38 38"><path d="M21.300 0H38V16.700ZM0 21.300V38H16.700Z" fill="#222"/><path d="M31 7L7 31" stroke="#222" stroke-width="4.700"/></svg>
<svg style="left:3409px;top:158px;" width="38" height="38" viewBox="0 0 38 38"><path d="M21.300 0H38V16.700ZM0 21.300V38H16.700Z" fill="#222"/><path d="M31 7L7 31" stroke="#222" stroke-width="4.700"/></svg>
<svg style="left:3409px;top:595px;" width="38" height="38" viewBox="0 0 38 38"><path d="M21.300 0H38V16.700ZM0 21.300V38H16.700Z" fill="#222"/><path d="M31 7L7 31" stroke="#222" stroke-width="4.700"/></svg>
<div style="left:773px;top:225px;width:138px;height:341px;background:#f3f5f9;"></div>
<div style="left:773px;top:566px;width:2712px;height:3px;background:#dde0e6;"></div>
<span class="t m" style="left:809.95px;top:249.60px;font-size:42px;color:#8a91a4;">1</span>
<span class="t m" style="left:810.20px;top:308.50px;font-size:42px;color:#8a91a4;">2</span>
<span class="t m" style="left:930.00px;top:248.60px;font-size:44px;color:#8c1a88;letter-spacing:-1.444px;-webkit-text-stroke:1.7px #8c1a88;">SELECT</span>
<span class="t m" style="left:1106.25px;top:257.60px;font-size:44px;">*</span>
<span class="t m" style="left:1154.70px;top:248.60px;font-size:44px;color:#8c1a88;letter-spacing:-0.338px;-webkit-text-stroke:1.7px #8c1a88;">FROM</span>
<span class="t m" style="left:1282.20px;top:248.60px;font-size:44px;color:#2454a6;letter-spacing:-0.844px;">public</span>
<span class="t m" style="left:1435.00px;top:248.60px;font-size:44px;">.</span>
<span class="t m" style="left:1459.30px;top:248.60px;font-size:44px;color:#2454a6;letter-spacing:-1.198px;">geometry_columns</span>
<div style="left:773px;top:659px;width:2712px;height:3px;background:#dde0e6;"></div>
<span class="t" style="left:795.80px;top:591.60px;font-size:42px;color:#44658f;letter-spacing:0.160px;">Data Output</span>
<span class="t" style="left:1071.60px;top:591.60px;font-size:42px;letter-spacing:0.826px;">Messages</span>
<span class="t" style="left:1317.00px;top:591.60px;font-size:42px;letter-spacing:1.453px;">Notifications</span>
<div style="left:773px;top:653px;width:277px;height:6px;background:#44658f;"></div>
<div style="left:772px;top:662px;width:2713px;height:98px;background:#ecedf2;"></div>
<div style="left:779px;top:668px;width:506px;height:78px;background:#f7f8fa;border:3px solid #ced3dc;border-radius:12px;"></div>
<div style="left:878px;top:668px;width:3px;height:84px;background:#ced3dc;"></div>
<div style="left:977px;top:668px;width:3px;height:84px;background:#ced3dc;"></div>
<div style="left:1034px;top:668px;width:3px;height:84px;background:#ced3dc;"></div>
<div style="left:1133px;top:668px;width:3px;height:84px;background:#ced3dc;"></div>
<div style="left:1190px;top:668px;width:3px;height:84px;background:#ced3dc;"></div>
<div style="left:977px;top:668px;width:54px;height:78px;background:#fff;border:3px solid #b9bfcd;border-radius:0;"></div>
<div style="left:1133px;top:668px;width:54px;height:78px;background:#fff;border:3px solid #b9bfcd;border-radius:0;"></div>
<svg style="left:794.0px;top:673.9px;" width="72" height="72" viewBox="0 0 24 24"><path fill="#77787a" fill-rule="evenodd" d="M13 10H3c-.55 0-1 .45-1 1s.45 1 1 1h10c.55 0 1-.45 1-1s-.45-1-1-1zm0-4H3c-.55 0-1 .45-1 1s.45 1 1 1h10c.55 0 1-.45 1-1s-.45-1-1-1zm5 8v-3c0-.55-.45-1-1-1s-1 .45-1 1v3h-3c-.55 0-1 .45-1 1s.45 1 1 1h3v3c0 .55.45 1 1 1s1-.45 1-1v-3h3c.55 0 1-.45 1-1s-.45-1-1-1h-3zM3 16h6c.55 0 1-.45 1-1s-.45-1-1-1H3c-.55 0-1 .45-1 1s.45 1 1 1z"/></svg>
<svg style="left:900.2px;top:681.0px;" width="57.6" height="57.6" viewBox="0 0 24 24"><path fill="#77787a" fill-rule="evenodd" d="M15 1H4c-1.1 0-2 .9-2 2v13c0 .55.45 1 1 1s1-.45 1-1V4c0-.55.45-1 1-1h10c.55 0 1-.45 1-1s-.45-1-1-1zm.59 4.59 5.83 5.83c.37.37.58.88.58 1.41V21c0 1.1-.9 2-2 2H8.99C7.89 23 7 22.1 7 21l.01-14c0-1.1.89-2 1.99-2h5.17c.53 0 1.04.21 1.42.59zM15 12h4.5L14 6.500V11c0 .55.45 1 1 1z"/></svg>
<svg style="left:978.1px;top:681.9px;" width="57.6" height="57.6" viewBox="0 0 24 24"><path fill="#222" fill-rule="evenodd" d="M7.41 8.59 12 13.17l4.59-4.58L18 10l-6 6-6-6 1.41-1.41z"/></svg>
<svg style="left:1056.1px;top:681.2px;" width="57.6" height="57.6" viewBox="0 0 24 24"><path fill="#77787a" fill-rule="evenodd" d="M19 2h-4.18C14.4.84 13.3 0 12 0S9.6.84 9.180 2H5c-1.1 0-2 .9-2 2v16c0 1.1.9 2 2 2h14c1.1 0 2-.9 2-2V4c0-1.1-.9-2-2-2zm-7 0c.55 0 1 .45 1 1s-.45 1-1 1-1-.45-1-1 .45-1 1-1zm6 18H6c-.55 0-1-.45-1-1V5c0-.55.45-1 1-1h1v1c0 1.1.9 2 2 2h6c1.1 0 2-.9 2-2V4h1c.55 0 1 .45 1 1v14c0 .55-.45 1-1 1z"/></svg>
<svg style="left:1134.2px;top:681.9px;" width="57.6" height="57.6" viewBox="0 0 24 24"><path fill="#222" fill-rule="evenodd" d="M7.41 8.59 12 13.17l4.59-4.58L18 10l-6 6-6-6 1.41-1.41z"/></svg>
<svg style="left:1212.2px;top:681.2px;" width="57.6" height="57.6" viewBox="0 0 24 24"><path fill="#77787a" fill-rule="evenodd" d="M6 19c0 1.1.9 2 2 2h8c1.1 0 2-.9 2-2V9c0-1.1-.9-2-2-2H8c-1.1 0-2 .9-2 2v10zM18 4h-2.500l-.71-.71c-.18-.18-.44-.29-.7-.29H9.910c-.26 0-.52.11-.7.29L8.500 4H6c-.55 0-1 .45-1 1s.45 1 1 1h12c.55 0 1-.45 1-1s-.45-1-1-1z"/></svg>
<div style="left:1304px;top:668px;width:96px;height:78px;background:#f7f8fa;border:3px solid #ced3dc;border-radius:12px;"></div>
<svg style="left:1334.6px;top:687.2px;" width="48" height="48" viewBox="0 0 48 48"><path d="M0 5.5A18.7 5.5 0 0 1 37.4 5.5V14.8A18.7 5.5 0 0 1 0 14.8Z" fill="#77787a"/><path d="M0 17.4A18.7 5.5 0 0 0 37.4 17.4V25.8A18.7 5.5 0 0 1 0 25.8Z" fill="#77787a"/><path d="M0 28.8A18.7 5.5 0 0 0 37.4 28.8V37.6A18.7 5.5 0 0 1 0 37.6Z" fill="#77787a"/><path d="M16.500 21.500H32.500L41 28.500V43.500Q41 45.500 39 45.500H18.500Q16.500 45.500 16.500 43.500Z" fill="#f7f8fa"/><path d="M20.300 20.800H32.300L40.800 28.300V42.500Q40.800 45 38.300 45H20.300Q17.800 45 17.800 42.500V23.300Q17.800 20.800 20.300 20.800Z" fill="#77787a"/><rect x="20.800" y="24.300" width="13.800" height="6.300" rx="1" fill="#f7f8fa"/><circle cx="28.300" cy="38.400" r="3.600" fill="#f7f8fa"/></svg>
<div style="left:1418px;top:668px;width:96px;height:78px;background:#fff;border:3px solid #b9bfcd;border-radius:12px;"></div>
<svg style="left:1440.4px;top:681.0px;" width="57.6" height="57.6" viewBox="0 0 24 24"><path fill="#222" fill-rule="evenodd" d="M16.59 9H15V4c0-.55-.45-1-1-1h-4c-.55 0-1 .45-1 1v5H7.410c-.89 0-1.34 1.08-.71 1.71l4.59 4.59c.39.39 1.02.39 1.41 0l4.59-4.59c.63-.63.19-1.71-.7-1.71zM5 19c0 .55.45 1 1 1h12c.55 0 1-.45 1-1s-.45-1-1-1H6c-.55 0-1 .45-1 1z"/></svg>
<div style="left:1532px;top:668px;width:96px;height:78px;background:#fff;border:3px solid #b9bfcd;border-radius:12px;"></div>
<svg style="left:1554.4px;top:681.0px;" width="57.6" height="57.6" viewBox="0 0 24 24"><path fill="#222" fill-rule="evenodd" d="M23 8c0 1.1-.9 2-2 2-.18 0-.35-.02-.51-.07l-3.56 3.55c.05.16.07.34.07.52 0 1.1-.9 2-2 2s-2-.9-2-2c0-.18.02-.36.07-.52l-2.55-2.55c-.16.05-.34.07-.52.07s-.36-.02-.52-.07l-4.55 4.56c.05.16.07.33.07.51 0 1.1-.9 2-2 2s-2-.9-2-2 .9-2 2-2c.18 0 .35.02.51.07l4.56-4.55C8.020 9.360 8 9.180 8 9c0-1.1.9-2 2-2s2 .9 2 2c0 .18-.02.36-.07.52l2.55 2.55c.16-.05.34-.07.52-.07s.36.02.52.07l3.55-3.56C19.020 8.350 19 8.180 19 8c0-1.1.9-2 2-2s2 .9 2 2z"/></svg>
<span class="t" style="left:1856.70px;top:688.30px;font-size:42px;letter-spacing:0.347px;">Showing rows: 1 to 6</span>
<div style="left:2265px;top:674px;width:84px;height:66px;background:#fff;border:3px solid #b9bfcd;border-radius:12px;"></div>
<svg style="left:2281.0px;top:680.6px;" width="57.6" height="57.6" viewBox="0 0 24 24"><path fill="#222" fill-rule="evenodd" d="M3 17.46v3.04c0 .28.22.5.5.5h3.04c.13 0 .26-.05.35-.15L17.81 9.94l-3.75-3.75L3.15 17.1c-.1.1-.15.22-.15.36zM20.71 7.04c.39-.39.39-1.02 0-1.41l-2.34-2.34c-.39-.39-1.02-.39-1.41 0l-1.83 1.83 3.75 3.75 1.83-1.83z"/></svg>
<div style="left:2382px;top:674px;width:84px;height:66px;background:#f7f8fa;border:3px solid #ced3dc;border-radius:12px;"></div>
<svg style="left:2398.1px;top:680.6px;" width="57.6" height="57.6" viewBox="0 0 24 24"><path fill="#77787a" fill-rule="evenodd" d="M5 3h14a2 2 0 0 1 2 2v7.1a2 2 0 0 1-2 2H5a2 2 0 0 1-2-2V5a2 2 0 0 1 2-2zM5.6 5.1a.6.6 0 0 0-.6.6V9.300h3.900a3.750 2.900 0 0 0 7.500 0H19.200V5.700a.6.6 0 0 0-.6-.6zM3 17.100a1 1 0 0 1 1-1h4.900a3.750 2.900 0 0 0 7.500 0H20a1 1 0 0 1 1 1V19.100a2 2 0 0 1-2 2H5a2 2 0 0 1-2-2z"/></svg>
<div style="left:2495px;top:680px;width:3px;height:60px;background:#dfe2e8;"></div>
<span class="t" style="left:2509.00px;top:688.60px;font-size:42px;letter-spacing:0.365px;">Page No:</span>
<div style="left:2695px;top:668px;width:264px;height:78px;background:#fff;border:3px solid #e0e3e9;border-radius:14px;"></div>
<span class="t" style="left:2730.60px;top:688.60px;font-size:42px;">1</span>
<span class="t" style="left:2976.50px;top:688.60px;font-size:42px;letter-spacing:0.435px;">of 1</span>
<div style="left:3074px;top:680px;width:3px;height:60px;background:#dfe2e8;"></div>
<div style="left:3090px;top:668px;width:391px;height:78px;background:#f7f8fa;border:3px solid #ced3dc;border-radius:12px;"></div>
<div style="left:3188px;top:668px;width:3px;height:84px;background:#ced3dc;"></div>
<div style="left:3287px;top:668px;width:3px;height:84px;background:#ced3dc;"></div>
<div style="left:3386px;top:668px;width:3px;height:84px;background:#ced3dc;"></div>
<svg style="left:3110.7px;top:681.0px;" width="57.6" height="57.6" viewBox="0 0 24 24"><path fill="#77787a" fill-rule="evenodd" d="M7 6c.55 0 1 .45 1 1v10c0 .55-.45 1-1 1s-1-.45-1-1V7c0-.55.45-1 1-1zm3.66 6.820 5.77 4.070c.66.47 1.58-.01 1.58-.82V7.930c0-.81-.91-1.28-1.58-.82l-5.77 4.070c-.57.4-.57 1.24 0 1.640z"/></svg>
<svg style="left:3210.0px;top:681.0px;" width="57.6" height="57.6" viewBox="0 0 24 24"><path fill="#77787a" fill-rule="evenodd" d="M11 16.070V7.930c0-.81-.91-1.28-1.58-.82l-5.77 4.070c-.56.4-.56 1.24 0 1.630l5.77 4.070c.67.47 1.58 0 1.58-.81zm1.66-3.250 5.77 4.070c.66.47 1.58-.01 1.58-.82V7.930c0-.81-.91-1.28-1.58-.82l-5.77 4.070c-.57.4-.57 1.24 0 1.640z"/></svg>
<svg style="left:3309.2px;top:681.0px;" width="57.6" height="57.6" viewBox="0 0 24 24"><path fill="#77787a" fill-rule="evenodd" d="M5.580 16.890l5.77-4.070c.56-.4.56-1.24 0-1.630L5.580 7.110C4.910 6.650 4 7.120 4 7.930v8.140c0 .81.91 1.28 1.58.82zM13 7.930v8.140c0 .81.91 1.28 1.58.82l5.77-4.070c.56-.4.56-1.24 0-1.630l-5.77-4.070c-.67-.47-1.58 0-1.58.81z"/></svg>
<svg style="left:3408.2px;top:681.0px;" width="57.6" height="57.6" viewBox="0 0 24 24"><path fill="#77787a" fill-rule="evenodd" d="M7.580 16.890l5.77-4.070c.56-.4.56-1.24 0-1.630L7.580 7.110C6.910 6.650 6 7.120 6 7.930v8.140c0 .81.91 1.28 1.58.82zM16 7v10c0 .55.45 1 1 1s1-.45 1-1V7c0-.55-.45-1-1-1s-1 .45-1 1z"/></svg>
<div style="left:773px;top:758px;width:2706px;height:573px;background:#e2e4ea;"></div>
<div style="left:773px;top:761px;width:132px;height:117px;background:#bcc1ce;"></div>
<div style="left:908px;top:761px;width:316px;height:117px;background:#bcc1ce;"></div>
<div style="left:1226.3px;top:761px;width:342.7px;height:117px;background:#bcc1ce;"></div>
<div style="left:1571.3px;top:761px;width:480.7px;height:117px;background:#bcc1ce;"></div>
<div style="left:2054.3px;top:761px;width:407.7px;height:117px;background:#bcc1ce;"></div>
<div style="left:2464.3px;top:761px;width:366.7px;height:117px;background:#bcc1ce;"></div>
<div style="left:2833.3px;top:761px;width:200.7px;height:117px;background:#bcc1ce;"></div>
<div style="left:3036.3px;top:761px;width:439.7px;height:117px;background:#bcc1ce;"></div>
<div style="left:773px;top:881px;width:132px;height:72px;background:#bcc1ce;"></div>
<div style="left:908px;top:881px;width:316px;height:72px;background:#ecedf2;"></div>
<div style="left:1226.3px;top:881px;width:342.7px;height:72px;background:#ecedf2;"></div>
<div style="left:1571.3px;top:881px;width:480.7px;height:72px;background:#ecedf2;"></div>
<div style="left:2054.3px;top:881px;width:407.7px;height:72px;background:#ecedf2;"></div>
<div style="left:2464.3px;top:881px;width:366.7px;height:72px;background:#ecedf2;"></div>
<div style="left:2833.3px;top:881px;width:200.7px;height:72px;background:#ecedf2;"></div>
<div style="left:3036.3px;top:881px;width:439.7px;height:72px;background:#ecedf2;"></div>
<div style="left:773px;top:956px;width:132px;height:72px;background:#bcc1ce;"></div>
<div style="left:908px;top:956px;width:316px;height:72px;background:#fff;"></div>
<div style="left:1226.3px;top:956px;width:342.7px;height:72px;background:#fff;"></div>
<div style="left:1571.3px;top:956px;width:480.7px;height:72px;background:#fff;"></div>
<div style="left:2054.3px;top:956px;width:407.7px;height:72px;background:#fff;"></div>
<div style="left:2464.3px;top:956px;width:366.7px;height:72px;background:#fff;"></div>
<div style="left:2833.3px;top:956px;width:200.7px;height:72px;background:#fff;"></div>
<div style="left:3036.3px;top:956px;width:439.7px;height:72px;background:#fff;"></div>
<div style="left:773px;top:1031px;width:132px;height:72px;background:#bcc1ce;"></div>
<div style="left:908px;top:1031px;width:316px;height:72px;background:#ecedf2;"></div>
<div style="left:1226.3px;top:1031px;width:342.7px;height:72px;background:#ecedf2;"></div>
<div style="left:1571.3px;top:1031px;width:480.7px;height:72px;background:#ecedf2;"></div>
<div style="left:2054.3px;top:1031px;width:407.7px;height:72px;background:#ecedf2;"></div>
<div style="left:2464.3px;top:1031px;width:366.7px;height:72px;background:#ecedf2;"></div>
<div style="left:2833.3px;top:1031px;width:200.7px;height:72px;background:#ecedf2;"></div>
<div style="left:3036.3px;top:1031px;width:439.7px;height:72px;background:#ecedf2;"></div>
<div style="left:773px;top:1106px;width:132px;height:72px;background:#bcc1ce;"></div>
<div style="left:908px;top:1106px;width:316px;height:72px;background:#fff;"></div>
<div style="left:1226.3px;top:1106px;width:342.7px;height:72px;background:#fff;"></div>
<div style="left:1571.3px;top:1106px;width:480.7px;height:72px;background:#fff;"></div>
<div style="left:2054.3px;top:1106px;width:407.7px;height:72px;background:#fff;"></div>
<div style="left:2464.3px;top:1106px;width:366.7px;height:72px;background:#fff;"></div>
<div style="left:2833.3px;top:1106px;width:200.7px;height:72px;background:#fff;"></div>
<div style="left:3036.3px;top:1106px;width:439.7px;height:72px;background:#fff;"></div>
<div style="left:773px;top:1181px;width:132px;height:72px;background:#bcc1ce;"></div>
<div style="left:908px;top:1181px;width:316px;height:72px;background:#ecedf2;"></div>
<div style="left:1226.3px;top:1181px;width:342.7px;height:72px;background:#ecedf2;"></div>
<div style="left:1571.3px;top:1181px;width:480.7px;height:72px;background:#ecedf2;"></div>
<div style="left:2054.3px;top:1181px;width:407.7px;height:72px;background:#ecedf2;"></div>
<div style="left:2464.3px;top:1181px;width:366.7px;height:72px;background:#ecedf2;"></div>
<div style="left:2833.3px;top:1181px;width:200.7px;height:72px;background:#ecedf2;"></div>
<div style="left:3036.3px;top:1181px;width:439.7px;height:72px;background:#ecedf2;"></div>
<div style="left:773px;top:1256px;width:132px;height:72px;background:#bcc1ce;"></div>
<div style="left:908px;top:1256px;width:316px;height:72px;background:#fff;"></div>
<div style="left:1226.3px;top:1256px;width:342.7px;height:72px;background:#fff;"></div>
<div style="left:1571.3px;top:1256px;width:480.7px;height:72px;background:#fff;"></div>
<div style="left:2054.3px;top:1256px;width:407.7px;height:72px;background:#fff;"></div>
<div style="left:2464.3px;top:1256px;width:366.7px;height:72px;background:#fff;"></div>
<div style="left:2833.3px;top:1256px;width:200.7px;height:72px;background:#fff;"></div>
<div style="left:3036.3px;top:1256px;width:439.7px;height:72px;background:#fff;"></div>
<div style="left:908px;top:761px;width:10px;height:570px;background:linear-gradient(90deg,rgba(60,70,100,.10),rgba(60,70,100,0));"></div>
<span class="t" style="left:926.60px;top:778.40px;font-size:36px;letter-spacing:0.466px;-webkit-text-stroke:1.3px #222;">f_table_catalog</span>
<div style="left:923.60px;top:825.60px;width:300.40px;height:46px;overflow:hidden"><span class="t" style="left:2.00px;top:0;font-size:36px;letter-spacing:0.436px;">character varying (30)</span></div>
<span class="t" style="left:1245.60px;top:778.40px;font-size:36px;letter-spacing:0.066px;-webkit-text-stroke:1.3px #222;">f_table_schema</span>
<span class="t" style="left:1243.60px;top:825.60px;font-size:36px;letter-spacing:1.190px;">name</span>
<svg style="left:1515.5px;top:801.55px;" width="41" height="41" viewBox="0 0 24 24"><path fill="#222" fill-rule="evenodd" d="M18 8h-1V6c0-2.76-2.24-5-5-5S7 3.240 7 6v2H6c-1.1 0-2 .9-2 2v10c0 1.1.9 2 2 2h12c1.1 0 2-.9 2-2V10c0-1.1-.9-2-2-2zm-6 9c-1.1 0-2-.9-2-2s.9-2 2-2 2 .9 2 2-.9 2-2 2zM9 8V6c0-1.66 1.34-3 3-3s3 1.34 3 3v2H9z"/></svg>
<span class="t" style="left:1590.60px;top:778.40px;font-size:36px;letter-spacing:0.033px;-webkit-text-stroke:1.3px #222;">f_table_name</span>
<span class="t" style="left:1588.60px;top:825.60px;font-size:36px;letter-spacing:0.790px;">name</span>
<svg style="left:1992.7px;top:801.55px;" width="41" height="41" viewBox="0 0 24 24"><path fill="#222" fill-rule="evenodd" d="M18 8h-1V6c0-2.76-2.24-5-5-5S7 3.240 7 6v2H6c-1.1 0-2 .9-2 2v10c0 1.1.9 2 2 2h12c1.1 0 2-.9 2-2V10c0-1.1-.9-2-2-2zm-6 9c-1.1 0-2-.9-2-2s.9-2 2-2 2 .9 2 2-.9 2-2 2zM9 8V6c0-1.66 1.34-3 3-3s3 1.34 3 3v2H9z"/></svg>
<span class="t" style="left:2073.60px;top:778.40px;font-size:36px;letter-spacing:0.454px;-webkit-text-stroke:1.3px #222;">f_geometry_column</span>
<span class="t" style="left:2071.60px;top:825.60px;font-size:36px;letter-spacing:1.056px;">name</span>
<svg style="left:2409.5px;top:801.55px;" width="41" height="41" viewBox="0 0 24 24"><path fill="#222" fill-rule="evenodd" d="M18 8h-1V6c0-2.76-2.24-5-5-5S7 3.240 7 6v2H6c-1.1 0-2 .9-2 2v10c0 1.1.9 2 2 2h12c1.1 0 2-.9 2-2V10c0-1.1-.9-2-2-2zm-6 9c-1.1 0-2-.9-2-2s.9-2 2-2 2 .9 2 2-.9 2-2 2zM9 8V6c0-1.66 1.34-3 3-3s3 1.34 3 3v2H9z"/></svg>
<span class="t" style="left:2482.60px;top:778.40px;font-size:36px;letter-spacing:0.661px;-webkit-text-stroke:1.3px #222;">coord_dimension</span>
<span class="t" style="left:2481.60px;top:825.60px;font-size:36px;letter-spacing:0.769px;">integer</span>
<svg style="left:2777.9px;top:801.55px;" width="41" height="41" viewBox="0 0 24 24"><path fill="#222" fill-rule="evenodd" d="M18 8h-1V6c0-2.76-2.24-5-5-5S7 3.240 7 6v2H6c-1.1 0-2 .9-2 2v10c0 1.1.9 2 2 2h12c1.1 0 2-.9 2-2V10c0-1.1-.9-2-2-2zm-6 9c-1.1 0-2-.9-2-2s.9-2 2-2 2 .9 2 2-.9 2-2 2zM9 8V6c0-1.66 1.34-3 3-3s3 1.34 3 3v2H9z"/></svg>
<span class="t" style="left:2851.60px;top:778.40px;font-size:36px;letter-spacing:1.171px;-webkit-text-stroke:1.3px #222;">srid</span>
<span class="t" style="left:2850.60px;top:825.60px;font-size:36px;letter-spacing:0.652px;">integer</span>
<svg style="left:2977.5px;top:801.55px;" width="41" height="41" viewBox="0 0 24 24"><path fill="#222" fill-rule="evenodd" d="M18 8h-1V6c0-2.76-2.24-5-5-5S7 3.240 7 6v2H6c-1.1 0-2 .9-2 2v10c0 1.1.9 2 2 2h12c1.1 0 2-.9 2-2V10c0-1.1-.9-2-2-2zm-6 9c-1.1 0-2-.9-2-2s.9-2 2-2 2 .9 2 2-.9 2-2 2zM9 8V6c0-1.66 1.34-3 3-3s3 1.34 3 3v2H9z"/></svg>
<span class="t" style="left:3055.60px;top:778.40px;font-size:36px;letter-spacing:0.392px;-webkit-text-stroke:1.3px #222;">type</span>
<span class="t" style="left:3054.60px;top:825.60px;font-size:36px;letter-spacing:0.431px;">character varying (30)</span>
<svg style="left:3426.7px;top:801.55px;" width="41" height="41" viewBox="0 0 24 24"><path fill="#222" fill-rule="evenodd" d="M18 8h-1V6c0-2.76-2.24-5-5-5S7 3.240 7 6v2H6c-1.1 0-2 .9-2 2v10c0 1.1.9 2 2 2h12c1.1 0 2-.9 2-2V10c0-1.1-.9-2-2-2zm-6 9c-1.1 0-2-.9-2-2s.9-2 2-2 2 .9 2 2-.9 2-2 2zM9 8V6c0-1.66 1.34-3 3-3s3 1.34 3 3v2H9z"/></svg>
<span class="t" style="left:797.70px;top:899.20px;font-size:36px;">1</span>
<span class="t" style="left:930.70px;top:899.20px;font-size:36px;letter-spacing:-0.142px;">helsinki_works…</span>
<span class="t" style="left:1248.70px;top:899.20px;font-size:36px;letter-spacing:1.106px;">helsinki</span>
<span class="t" style="left:1594.20px;top:899.20px;font-size:36px;letter-spacing:-0.124px;">aluesarjat_avainluvut_20…</span>
<span class="t" style="left:2081.60px;top:899.20px;font-size:36px;letter-spacing:0.118px;">wkb_geometry</span>
<span class="t" style="left:2785.75px;top:899.20px;font-size:36px;">2</span>
<span class="t" style="left:2927.10px;top:899.20px;font-size:36px;letter-spacing:0.879px;">3067</span>
<span class="t" style="left:3058.80px;top:899.20px;font-size:36px;letter-spacing:-1.863px;">POLYGON</span>
<span class="t" style="left:798.70px;top:974.20px;font-size:36px;">2</span>
<span class="t" style="left:930.70px;top:974.20px;font-size:36px;letter-spacing:-0.142px;">helsinki_works…</span>
<span class="t" style="left:1248.70px;top:974.20px;font-size:36px;letter-spacing:1.106px;">helsinki</span>
<span class="t" style="left:1594.20px;top:974.20px;font-size:36px;letter-spacing:0.626px;">kaupunginosajako</span>
<span class="t" style="left:2081.60px;top:974.20px;font-size:36px;letter-spacing:0.118px;">wkb_geometry</span>
<span class="t" style="left:2785.75px;top:974.20px;font-size:36px;">2</span>
<span class="t" style="left:2927.10px;top:974.20px;font-size:36px;letter-spacing:0.879px;">3067</span>
<span class="t" style="left:3058.80px;top:974.20px;font-size:36px;letter-spacing:-1.863px;">POLYGON</span>
<span class="t" style="left:798.70px;top:1049.20px;font-size:36px;">3</span>
<span class="t" style="left:930.70px;top:1049.20px;font-size:36px;letter-spacing:-0.142px;">helsinki_works…</span>
<span class="t" style="left:1248.70px;top:1049.20px;font-size:36px;letter-spacing:1.106px;">helsinki</span>
<span class="t" style="left:1594.20px;top:1049.20px;font-size:36px;letter-spacing:0.391px;">liikennevaylat</span>
<span class="t" style="left:2081.60px;top:1049.20px;font-size:36px;letter-spacing:0.118px;">wkb_geometry</span>
<span class="t" style="left:2785.75px;top:1049.20px;font-size:36px;">2</span>
<span class="t" style="left:2927.10px;top:1049.20px;font-size:36px;letter-spacing:0.879px;">3067</span>
<span class="t" style="left:3058.80px;top:1049.20px;font-size:36px;letter-spacing:-0.959px;">LINESTRING</span>
<span class="t" style="left:799.70px;top:1124.20px;font-size:36px;">4</span>
<span class="t" style="left:930.70px;top:1124.20px;font-size:36px;letter-spacing:-0.142px;">helsinki_works…</span>
<span class="t" style="left:1248.70px;top:1124.20px;font-size:36px;letter-spacing:1.106px;">helsinki</span>
<span class="t" style="left:1594.20px;top:1124.20px;font-size:36px;letter-spacing:0.478px;">piirijako_osaalue</span>
<span class="t" style="left:2081.60px;top:1124.20px;font-size:36px;letter-spacing:0.118px;">wkb_geometry</span>
<span class="t" style="left:2785.75px;top:1124.20px;font-size:36px;">2</span>
<span class="t" style="left:2927.10px;top:1124.20px;font-size:36px;letter-spacing:0.879px;">3067</span>
<span class="t" style="left:3058.80px;top:1124.20px;font-size:36px;letter-spacing:-1.863px;">POLYGON</span>
<span class="t" style="left:798.70px;top:1199.20px;font-size:36px;">5</span>
<span class="t" style="left:930.70px;top:1199.20px;font-size:36px;letter-spacing:-0.142px;">helsinki_works…</span>
<span class="t" style="left:1248.70px;top:1199.20px;font-size:36px;letter-spacing:1.106px;">helsinki</span>
<span class="t" style="left:1594.20px;top:1199.20px;font-size:36px;letter-spacing:0.540px;">puurekisteri_piste</span>
<span class="t" style="left:2081.60px;top:1199.20px;font-size:36px;letter-spacing:0.118px;">wkb_geometry</span>
<span class="t" style="left:2785.75px;top:1199.20px;font-size:36px;">2</span>
<span class="t" style="left:2927.10px;top:1199.20px;font-size:36px;letter-spacing:0.879px;">3067</span>
<span class="t" style="left:3058.80px;top:1199.20px;font-size:36px;letter-spacing:-0.803px;">POINT</span>
<span class="t" style="left:798.70px;top:1274.20px;font-size:36px;">6</span>
<span class="t" style="left:930.70px;top:1274.20px;font-size:36px;letter-spacing:-0.142px;">helsinki_works…</span>
<span class="t" style="left:1248.70px;top:1274.20px;font-size:36px;letter-spacing:1.106px;">helsinki</span>
<span class="t" style="left:1594.20px;top:1274.20px;font-size:36px;letter-spacing:0.017px;">ylre_viheralueet</span>
<span class="t" style="left:2081.60px;top:1274.20px;font-size:36px;letter-spacing:0.118px;">wkb_geometry</span>
<span class="t" style="left:2785.75px;top:1274.20px;font-size:36px;">2</span>
<span class="t" style="left:2927.10px;top:1274.20px;font-size:36px;letter-spacing:0.879px;">3067</span>
<span class="t" style="left:3058.80px;top:1274.20px;font-size:36px;letter-spacing:-1.863px;">POLYGON</span>
</div></body></html>
